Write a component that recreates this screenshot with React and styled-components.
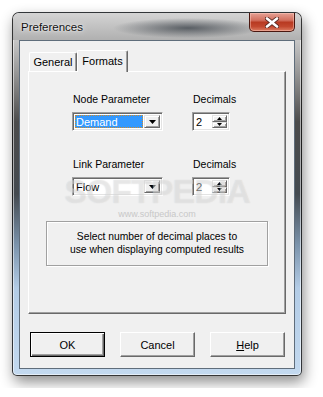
import React from 'react';
import styled, { createGlobalStyle } from 'styled-components';

const GlobalStyle = createGlobalStyle`
  html, body {
    margin: 0;
    background: #ffffff;
  }
  * {
    box-sizing: border-box;
  }
`;

const Page = styled.div`
  padding: 12px;
  font-family: "Liberation Sans", Arial, sans-serif;
  font-size: 10.3px;
  color: #000;
`;

const Window = styled.div`
  width: 290px;
  height: 364px;
  display: flex;
  flex-direction: column;
  border: 1px solid rgba(25, 25, 25, 0.85);
  border-radius: 7px 7px 5px 5px;
  box-shadow: 2px 6px 14px rgba(0, 0, 0, 0.45), inset 0 0 0 1px rgba(255, 255, 255, 0.55);
  background:
    linear-gradient(180deg, #d8d8d8 0%, #c4c4c4 8%, #9a9a9a 16%, #4c4c4c 30%, #444a50 50%, #7b93ab 64%, #b3cce6 76%, #c3d9ef 100%);
  overflow: hidden;
`;

const TitleBar = styled.div`
  height: 27px;
  display: flex;
  align-items: flex-start;
  justify-content: space-between;
  padding-left: 8px;
  background:
    radial-gradient(ellipse 75px 10px at 175px 15px, rgba(45, 52, 60, 0.7), rgba(45, 52, 60, 0) 100%),
    linear-gradient(180deg, #d4d4d4 0%, #c2c2c2 50%, #b0b0b0 100%);
`;

const Title = styled.span`
  align-self: center;
  font-size: 11.5px;
  color: #111;
  text-shadow: 0 0 6px rgba(255, 255, 255, 0.9), 0 0 2px #fff;
`;

const CloseButton = styled.div`
  width: 46px;
  height: 19px;
  margin-right: 6px;
  display: flex;
  align-items: center;
  justify-content: center;
  border: 1px solid #4a1710;
  border-top: none;
  border-radius: 0 0 5px 5px;
  background: linear-gradient(180deg, #e6a195 0%, #d2705f 40%, #b83a22 52%, #c2482f 75%, #dc7c62 100%);
  box-shadow: inset 0 0 0 1px rgba(255, 210, 200, 0.45);
`;

const Client = styled.div`
  flex: 1;
  margin: 0 6px 6px 6px;
  padding: 9px 8px 0 8px;
  background: #f0f0f0;
  border: 1px solid #5f6d7b;
  display: flex;
  flex-direction: column;
`;

const TabStrip = styled.div`
  display: flex;
  align-items: flex-end;
  height: 21px;
  padding-left: 1px;
  position: relative;
  z-index: 1;
`;

const Tab = styled.div`
  width: ${(p) => p.$w}px;
  height: ${(p) => (p.$active ? 22 : 19)}px;
  margin-bottom: ${(p) => (p.$active ? -1 : 0)}px;
  padding-top: ${(p) => (p.$active ? 4 : 3)}px;
  text-align: center;
  font-size: 11px;
  background: #f0f0f0;
  border-top: 1px solid #fff;
  border-left: 1px solid #fff;
  border-right: 1px solid #696969;
  border-radius: 2px 2px 0 0;
  box-shadow: inset -1px 0 0 #a0a0a0;
`;

const Panel = styled.div`
  position: relative;
  height: 243px;
  border: 1px solid;
  border-color: #fff #696969 #696969 #fff;
  box-shadow: inset -1px -1px 0 #a0a0a0;
  padding-top: 21px;
  display: flex;
  flex-direction: column;
`;

const FieldGroup = styled.div`
  display: grid;
  grid-template-columns: 91px 38px;
  column-gap: 29px;
  row-gap: 6px;
  padding-left: 43px;
  margin-top: ${(p) => p.$top || 0}px;
`;

const Label = styled.div`
  line-height: 13px;
  padding-left: 1px;
  font-size: 10.5px;
  white-space: nowrap;
`;

const Sunken = styled.div`
  height: 19px;
  display: flex;
  align-items: stretch;
  background: #fff;
  border: 1px solid;
  border-color: #a0a0a0 #fff #fff #a0a0a0;
  box-shadow: inset 1px 1px 0 #696969, inset -1px -1px 0 #e3e3e3;
  padding: 2px;
  font-size: 11px;
`;

const ComboText = styled.div`
  flex: 1;
  display: flex;
  align-items: center;
  padding-left: 1px;
  margin-right: 1px;
  color: ${(p) => (p.$selected ? '#fff' : '#000')};
  background: ${(p) => (p.$selected ? '#3399ff' : 'transparent')};
  outline: ${(p) => (p.$selected ? '1px dotted #d08a2a' : 'none')};
  outline-offset: -1px;
`;

const RaisedButton = styled.div`
  flex: ${(p) => (p.$stack ? '1 1 0' : `0 0 ${p.$w}px`)};
  width: ${(p) => p.$w}px;
  display: flex;
  align-items: center;
  justify-content: center;
  background: #f0f0f0;
  border: 1px solid;
  border-color: #e3e3e3 #696969 #696969 #e3e3e3;
  box-shadow: inset 1px 1px 0 #fff, inset -1px -1px 0 #a0a0a0;
`;

const SpinText = styled.div`
  flex: 1;
  display: flex;
  align-items: center;
  padding-left: 1px;
`;

const SpinButtons = styled.div`
  flex: 0 0 15px;
  display: flex;
  flex-direction: column;
`;

const InfoBox = styled.div`
  margin: 25px 17px 0 17px;
  height: 45px;
  border: 1px solid #a0a0a0;
  box-shadow: inset 1px 1px 0 #fff, 1px 1px 0 #fff;
  padding-top: 8px;
  text-align: center;
  line-height: 13px;
`;

const Watermark = styled.div`
  position: absolute;
  left: 0;
  right: 0;
  top: ${(p) => p.$top}px;
  text-align: center;
  pointer-events: none;
  color: ${(p) => p.$color};
  font-size: ${(p) => p.$size}px;
  font-weight: ${(p) => p.$weight || 400};
  letter-spacing: ${(p) => p.$spacing || 0}px;
  text-shadow: ${(p) => p.$shadow || 'none'};
`;

const ButtonRow = styled.div`
  display: flex;
  gap: 15px;
  padding-left: 2px;
  margin-top: 18px;
`;

const PushButton = styled.div`
  width: 75px;
  height: 25px;
  display: flex;
  align-items: center;
  justify-content: center;
  background: #f0f0f0;
  border: 1px solid;
  border-color: ${(p) => (p.$default ? '#000' : '#fff #696969 #696969 #fff')};
  box-shadow: ${(p) =>
    p.$default
      ? 'inset 1px 1px 0 #fff, inset -1px -1px 0 #696969, inset -2px -2px 0 #a0a0a0'
      : 'inset -1px -1px 0 #a0a0a0'};
  font-size: 11px;
`;

const DownArrow = () => (
  <svg width="7" height="4" viewBox="0 0 7 4">
    <path d="M0 0H7L3.5 4Z" fill="#000" />
  </svg>
);

const SmallArrow = ({ up }) => (
  <svg width="5" height="3" viewBox="0 0 5 3">
    <path d={up ? 'M0 3H5L2.5 0Z' : 'M0 0H5L2.5 3Z'} fill="#000" />
  </svg>
);

const CloseGlyph = () => (
  <svg width="14" height="11" viewBox="0 0 14 11">
    <path d="M2 1.5L12 9.5M12 1.5L2 9.5" stroke="#5a2a22" strokeWidth="4.2" strokeLinecap="round" />
    <path d="M2 1.5L12 9.5M12 1.5L2 9.5" stroke="#fff" strokeWidth="2.6" strokeLinecap="round" />
  </svg>
);

function Combo({ value, selected }) {
  return (
    <Sunken>
      <ComboText $selected={selected}>{value}</ComboText>
      <RaisedButton $w={16}>
        <DownArrow />
      </RaisedButton>
    </Sunken>
  );
}

function Spinner({ value }) {
  return (
    <Sunken>
      <SpinText>{value}</SpinText>
      <SpinButtons>
        <RaisedButton $w={15} $stack>
          <SmallArrow up />
        </RaisedButton>
        <RaisedButton $w={15} $stack>
          <SmallArrow />
        </RaisedButton>
      </SpinButtons>
    </Sunken>
  );
}

export default function App() {
  return (
    <Page>
      <GlobalStyle />
      <Window>
        <TitleBar>
          <Title>Preferences</Title>
          <CloseButton>
            <CloseGlyph />
          </CloseButton>
        </TitleBar>
        <Client>
          <TabStrip>
            <Tab $w={48}>General</Tab>
            <Tab $w={51} $active>
              Formats
            </Tab>
          </TabStrip>
          <Panel>
            <FieldGroup>
              <Label>Node Parameter</Label>
              <Label>Decimals</Label>
              <Combo value="Demand" selected />
              <Spinner value="2" />
            </FieldGroup>
            <FieldGroup $top={27}>
              <Label>Link Parameter</Label>
              <Label>Decimals</Label>
              <Combo value="Flow" />
              <Spinner value="2" />
            </FieldGroup>
            <InfoBox>
              Select number of decimal places to
              <br />
              use when displaying computed results
            </InfoBox>
            <Watermark
              $top={100}
              $size={34}
              $weight={700}
              $spacing={-1}
              $color="rgba(255,255,255,0.3)"
              $shadow="0 0 1px rgba(160,160,160,0.35)"
            >
              SOFTPEDIA
            </Watermark>
            <Watermark $top={137} $size={9} $color="#c8c8c8">
              www.softpedia.com
            </Watermark>
          </Panel>
          <ButtonRow>
            <PushButton $default>OK</PushButton>
            <PushButton>Cancel</PushButton>
            <PushButton>
              <span>
                <u>H</u>elp
              </span>
            </PushButton>
          </ButtonRow>
        </Client>
      </Window>
    </Page>
  );
}
